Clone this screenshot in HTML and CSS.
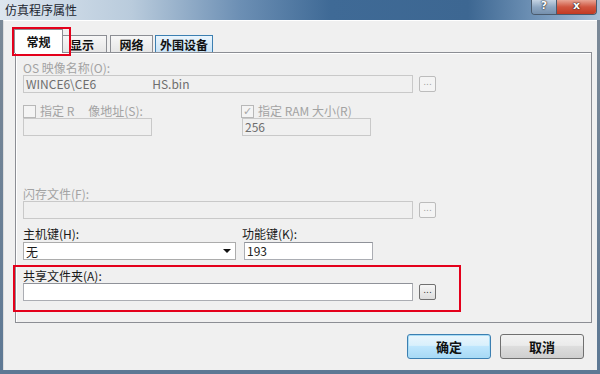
FILE: index.html
```html
<!DOCTYPE html>
<html lang="zh-CN">
<head>
    <meta charset="UTF-8">
    <title>仿真程序属性</title>
    <link rel="stylesheet" href="styles.css">
</head>
<body>
<div class="window">
  <div class="titlebar">
    <div class="title">仿真程序属性</div>
    <div class="caption_btns">
      <div class="cap_help">?</div>
      <div class="cap_close">x</div>
    </div>
  </div>
  <div class="client">
    <div class="tabs">
      <div class="tab tab_active">常规</div>
      <div class="tab tab_show">显示</div>
      <div class="tab tab_net">网络</div>
      <div class="tab tab_hover">外围设备</div>
    </div>
    <div class="panel">
      <div class="label disabled row_os">OS 映像名称(O):</div>
      <div class="line">
        <div class="input input_wide input_off">WINCE6\CE6<span class="gap"></span>HS.bin</div>
        <div class="dots dots_off">...</div>
      </div>

      <div class="check_row">
        <div class="check_col">
          <span class="checkbox"></span>
          <span class="label disabled">指定 R<span class="gap_sm"></span>像地址(S):</span>
        </div>
        <div class="check_col">
          <span class="checkbox checked">&#10003;</span>
          <span class="label disabled">指定 RAM 大小(R)</span>
        </div>
      </div>
      <div class="line">
        <div class="input input_small input_off input_left"></div>
        <div class="input input_small input_off">256</div>
      </div>

      <div class="label disabled row_flash">闪存文件(F):</div>
      <div class="line">
        <div class="input input_wide input_off"></div>
        <div class="dots dots_off">...</div>
      </div>

      <div class="key_labels">
        <div class="label key_left">主机键(H):</div>
        <div class="label">功能键(K):</div>
      </div>
      <div class="line">
        <div class="select">
          <span>无</span>
          <span class="arrow"></span>
        </div>
        <div class="input input_small">193</div>
      </div>

      <div class="label row_share">共享文件夹(A):</div>
      <div class="line">
        <div class="input input_wide"></div>
        <div class="dots">...</div>
      </div>
    </div>
    <div class="buttons">
      <div class="btn btn_default">确定</div>
      <div class="btn">取消</div>
    </div>

    <div class="mark mark_tab"></div>
    <div class="mark mark_share"></div>
  </div>
</div>
</body>
</html>
```

FILE: styles.css
```css
body, html {
  margin: 0;
}
body {
  width: 600px;
  height: 374px;
  overflow: hidden;
  background: #5d7894;
  font-family: "Noto Sans CJK SC", "Microsoft YaHei", sans-serif;
  font-size: 12px;
  color: #1a1a1a;
}
.window {
  width: 600px;
  height: 374px;
  display: flex;
  flex-direction: column;
  background: linear-gradient(to bottom, #7d8a97 0, #5d7894 100%);
}
.titlebar {
  height: 20px;
  display: flex;
  justify-content: space-between;
  background: linear-gradient(to right, #dde6ef 0%, #b9cbdc 22%, #6c8fb4 40%, #3f6a96 55%, #3d6792 78%, #7c9dbf 92%, #a9c0d6 100%);
}
.title {
  padding: 3px 0 0 5px;
  font-size: 12px;
  line-height: 14px;
  color: #1c2630;
}
.caption_btns {
  display: flex;
  height: 14px;
  margin-right: 3px;
  border: 1px solid #4a5a6c;
  border-top: none;
  border-radius: 0 0 4px 4px;
  overflow: hidden;
}
.cap_help, .cap_close {
  color: #fff;
  font-family: "DejaVu Sans", sans-serif;
  font-weight: bold;
  font-size: 11px;
  line-height: 12px;
  text-align: center;
  text-shadow: 0 0 2px #222, 0 0 1px #000;
}
.cap_help {
  width: 24px;
  background: linear-gradient(to bottom, #c5d4e3 0, #8ea7c2 50%, #7590ad 100%);
  border-right: 1px solid #4a5a6c;
}
.cap_close {
  width: 39px;
  background: linear-gradient(to bottom, #e8a595 0, #d0553f 50%, #c23a22 100%);
}
.client {
  position: relative;
  flex: 1;
  margin: 0 3px 4px 3px;
  background: #f0f0f0;
  border-top: 1px solid #ffffff;
  border-left: 1px solid #dcdcdc;
}
.tabs {
  display: flex;
  align-items: flex-end;
  height: 22px;
  margin: 9px 0 0 10px;
  position: relative;
  z-index: 2;
}
.tab {
  box-sizing: border-box;
  height: 17px;
  margin-left: 2px;
  border: 1px solid #8c8e94;
  border-bottom: none;
  background: linear-gradient(to bottom, #f7f7f7 0, #e6e6e6 100%);
  font-weight: bold;
  font-size: 12px;
  line-height: 17px;
  text-align: center;
  color: #111;
}
.tab_active {
  width: 49px;
  height: 24px;
  margin-left: 0;
  background: #ffffff;
  line-height: 24px;
  margin-bottom: -1px;
  position: relative;
  z-index: 3;
}
.tab_show {
  width: 46px;
  margin-left: -2px;
  padding-left: 8px;
  text-align: left;
}
.tab_net {
  width: 43px;
  margin-left: 3px;
}
.tab_hover {
  width: 58px;
  background: linear-gradient(to bottom, #eaf5fd 0, #c9e3f7 100%);
  border-color: #3c7fb1;
}
.panel {
  width: 568px;
  height: 269px;
  margin-left: 11px;
  border: 1px solid #8c8e94;
  background: #f0f0f0;
  box-shadow: inset 1px 1px 0 #ffffff;
  padding-left: 7px;
  box-sizing: content-box;
}
.label {
  line-height: 14px;
  font-size: 12px;
  white-space: nowrap;
}
.disabled {
  color: #a3a3a3;
}
.row_os {
  margin-top: 8px;
}
.row_flash {
  margin-top: 51px;
}
.row_share {
  margin-top: 9px;
}
.line {
  display: flex;
  align-items: center;
  height: 18px;
}
.input {
  height: 16px;
  box-sizing: content-box;
  border: 1px solid #abadb3;
  border-top-color: #8f9299;
  background: #ffffff;
  padding-left: 2px;
  line-height: 16px;
  font-size: 12px;
  color: #202020;
  white-space: nowrap;
}
.input_off {
  border-color: #c9c9c9;
  background: #f0f0f0;
  color: #6e6e6e;
}
.input_wide {
  width: 386px;
}
.input_small {
  width: 125px;
}
.input_left {
  margin-right: 90px;
}
.gap {
  display: inline-block;
  width: 56px;
}
.gap_sm {
  display: inline-block;
  width: 14px;
}
.dots {
  width: 15px;
  height: 14px;
  margin-left: 6px;
  border: 1px solid #707070;
  border-radius: 2px;
  background: linear-gradient(to bottom, #f6f6f6 0, #dddddd 100%);
  font-size: 9px;
  line-height: 10px;
  text-align: center;
  color: #333;
  font-family: "DejaVu Sans", sans-serif;
}
.dots_off {
  border-color: #bcbcbc;
  background: #f4f4f4;
  color: #a0a0a0;
}
.check_row {
  display: flex;
  margin-top: 11px;
  height: 14px;
  align-items: center;
}
.check_col {
  display: flex;
  align-items: center;
  gap: 4px;
  width: 218px;
}
.checkbox {
  width: 11px;
  height: 11px;
  border: 1px solid #b8b8b8;
  background: #f4f4f4;
  font-size: 11px;
  line-height: 11px;
  text-align: center;
  color: #a8a8a8;
  font-family: "DejaVu Sans", sans-serif;
}
.key_labels {
  display: flex;
  margin-top: 8px;
  margin-bottom: 1px;
}
.key_left {
  width: 219px;
}
.select {
  width: 209px;
  height: 16px;
  margin-right: 8px;
  border: 1px solid #acacac;
  background: #ffffff;
  padding-left: 2px;
  display: flex;
  justify-content: space-between;
  align-items: center;
  font-size: 12px;
  box-sizing: content-box;
}
.arrow {
  width: 0;
  height: 0;
  margin-right: 4px;
  border-left: 4px solid transparent;
  border-right: 4px solid transparent;
  border-top: 4px solid #111;
}
.buttons {
  display: flex;
  justify-content: flex-end;
  gap: 9px;
  margin: 11px 13px 0 0;
}
.btn {
  width: 82px;
  height: 23px;
  border: 1px solid #707070;
  border-radius: 3px;
  background: linear-gradient(to bottom, #f2f2f2 0, #ebebeb 45%, #dddddd 50%, #cfcfcf 100%);
  text-align: center;
  font-weight: bold;
  font-size: 13px;
  line-height: 23px;
  color: #111;
}
.btn_default {
  border-color: #3c7fb1;
  box-shadow: inset 0 0 0 1px #a8dcf6;
  background: linear-gradient(to bottom, #eaf6fd 0, #d9f0fc 45%, #bee6fd 50%, #a7d9f5 100%);
}
.mark {
  position: absolute;
  border: 2px solid #e4001b;
  z-index: 5;
}
.mark_tab {
  left: 8px;
  top: 6px;
  width: 55px;
  height: 25px;
}
.mark_share {
  left: 9px;
  top: 244px;
  width: 444px;
  height: 43px;
}
```
